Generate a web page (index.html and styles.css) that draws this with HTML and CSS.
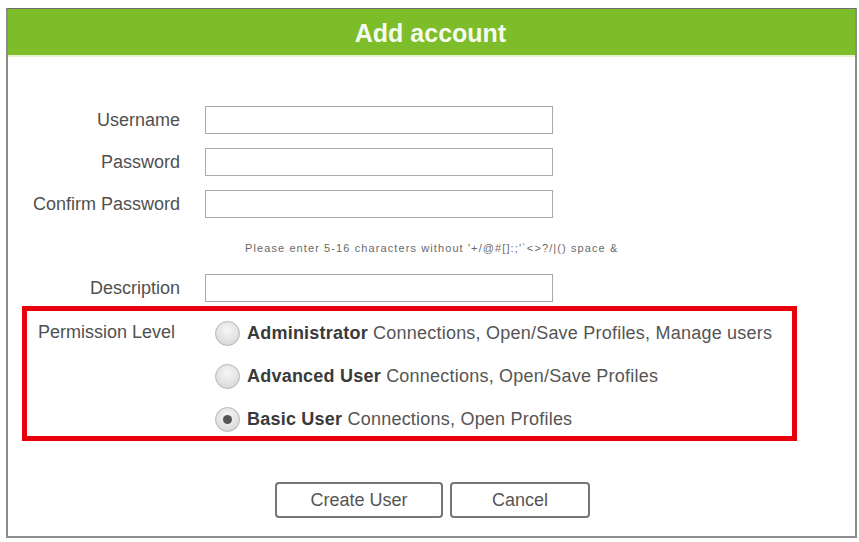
FILE: index.html
```html
<!DOCTYPE html>
<html>
<head>
<meta charset="utf-8">
<link rel="stylesheet" href="styles.css">
</head>
<body>
<div class="dialog">
  <div class="header">Add account</div>
  <div class="form">
    <div class="row"><label class="lbl">Username</label><div class="input"></div></div>
    <div class="row"><label class="lbl">Password</label><div class="input"></div></div>
    <div class="row"><label class="lbl">Confirm Password</label><div class="input"></div></div>
    <div class="hint">Please enter 5-16 characters without '+/@#[]:;'`&lt;&gt;?/|() space &amp;</div>
    <div class="row"><label class="lbl">Description</label><div class="input"></div></div>
    <div class="perm">
      <div class="perm-label">Permission Level</div>
      <div class="options">
        <div class="opt"><span class="radio"></span><span class="otext"><b>Administrator</b> Connections, Open/Save Profiles, Manage users</span></div>
        <div class="opt"><span class="radio"></span><span class="otext"><b>Advanced User</b> Connections, Open/Save Profiles</span></div>
        <div class="opt"><span class="radio checked"></span><span class="otext"><b>Basic User</b> Connections, Open Profiles</span></div>
      </div>
    </div>
    <div class="buttons">
      <button class="btn btn-create">Create User</button>
      <button class="btn btn-cancel">Cancel</button>
    </div>
  </div>
</div>
</body>
</html>
```
FILE: styles.css
```css
html, body {
  margin: 0;
  padding: 0;
  background: #ffffff;
}
body {
  font-family: "Liberation Sans", Arial, sans-serif;
  width: 859px;
  height: 542px;
  overflow: hidden;
}
.dialog {
  box-sizing: border-box;
  margin: 8px 0 0 6px;
  width: 851px;
  height: 530px;
  border: 2px solid #8c8c8c;
  border-top: 1px solid #6f6f6f;
  background: #fff;
}
.header {
  height: 46px;
  background: #7dbd2a;
  border-bottom: 2px solid #e3f1cf;
  color: #f6fbef;
  font-weight: bold;
  font-size: 25px;
  line-height: 48px;
  text-align: center;
  padding-right: 2px;
}
.form {
  padding-top: 49px;
}
.row {
  display: grid;
  grid-template-columns: 172px 348px;
  column-gap: 25px;
  align-items: center;
  height: 28px;
  margin-bottom: 14px;
}
.row:nth-child(3) { margin-bottom: 0; }
.lbl {
  text-align: right;
  font-size: 18px;
  color: #505050;
}
.input {
  box-sizing: border-box;
  height: 28px;
  border: 1px solid #a9a9a9;
  background: #fff;
}
.hint {
  margin: 24px 0 20px 237px;
  height: 12px;
  line-height: 12px;
  font-size: 11px;
  color: #6a6a6a;
  letter-spacing: 1.1px;
}
.row:nth-child(5) { margin-bottom: 4px; }
.perm {
  box-sizing: border-box;
  margin-left: 14px;
  width: 775px;
  height: 135px;
  border: 5px solid #e8000b;
  display: flex;
  padding: 10px 0 5px 11px;
}
.perm-label {
  width: 178px;
  font-size: 18px;
  color: #505050;
  line-height: 24px;
  margin-top: -1px;
}
.options {
  display: flex;
  flex-direction: column;
  gap: 19px;
}
.opt {
  display: flex;
  align-items: center;
  height: 24px;
  gap: 8px;
}
.radio {
  box-sizing: border-box;
  width: 25px;
  height: 25px;
  margin-left: -1px;
  margin-right: -1px;
  border-radius: 50%;
  border: 1px solid #b5b5b5;
  background: radial-gradient(circle at 50% 35%, #f6f6f6 0%, #e3e3e3 55%, #cfcfcf 100%);
  display: flex;
  align-items: center;
  justify-content: center;
}
.radio.checked::after {
  content: "";
  width: 9px;
  height: 9px;
  border-radius: 50%;
  background: #555;
}
.otext {
  font-size: 18px;
  color: #555;
  letter-spacing: 0.22px;
}
.otext b {
  color: #3a3a3a;
}
.buttons {
  display: flex;
  gap: 7px;
  margin: 41px 0 0 267px;
}
.btn {
  box-sizing: border-box;
  height: 36px;
  border: 2px solid #767676;
  border-radius: 4px;
  background: #fff;
  font-family: "Liberation Sans", Arial, sans-serif;
  font-size: 18px;
  color: #555;
  padding: 0;
}
.btn-create { width: 168px; }
.btn-cancel { width: 140px; }
```
